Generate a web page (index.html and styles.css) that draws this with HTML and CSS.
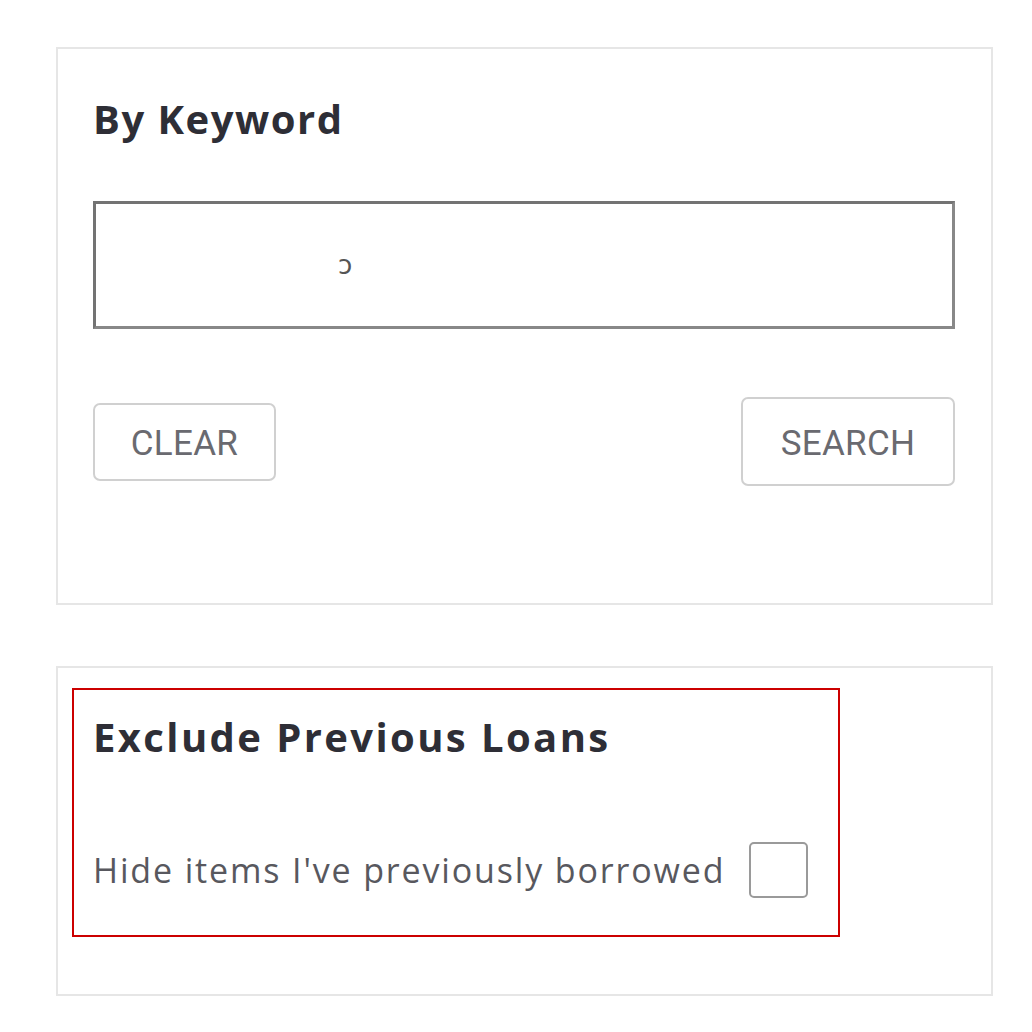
FILE: index.html
```html
<!DOCTYPE html>
<html>
<head>
<meta charset="utf-8">
<link rel="stylesheet" href="styles.css">
</head>
<body>
<div class="page">
  <section class="card card-keyword">
    <h2 class="card-title">By Keyword</h2>
    <div class="keyword-input"><span class="caret">ↄ</span></div>
    <div class="actions">
      <button class="btn btn-clear">CLEAR</button>
      <button class="btn btn-search">SEARCH</button>
    </div>
  </section>
  <section class="card card-loans">
    <div class="annot">
      <h2 class="card-title loans-title">Exclude Previous Loans</h2>
      <label class="check-row">
        <span class="check-label">Hide items I've previously borrowed</span>
        <span class="checkbox"></span>
      </label>
    </div>
  </section>
</div>
</body>
</html>
```
FILE: styles.css
```css
html, body {
  margin: 0;
  padding: 0;
  background: #ffffff;
}
.page {
  padding: 47px 39px 0 56px;
  display: flex;
  flex-direction: column;
  gap: 61px;
  font-family: "Open Sans", Lato, sans-serif;
}
.card {
  border: 2px solid #e6e6e6;
  box-sizing: border-box;
  width: 937px;
}
.card-keyword {
  height: 558px;
  padding: 43px 36px 0 35px;
}
.card-title {
  margin: 0;
  font-size: 40px;
  line-height: 53px;
  font-weight: 700;
  letter-spacing: 1.5px;
  color: #2e2e36;
}
.keyword-input {
  margin-top: 56px;
  height: 128px;
  box-sizing: border-box;
  border: 3px solid #737373;
  border-bottom-color: #888888;
  border-right-color: #888888;
  position: relative;
}
.caret {
  position: absolute;
  left: 242px;
  top: 47px;
  font-family: "DejaVu Sans", sans-serif;
  font-size: 26px;
  line-height: 28px;
  color: #555;
}
.actions {
  margin-top: 68px;
  display: flex;
  justify-content: space-between;
  align-items: center;
}
.btn {
  background: #fff;
  border: 2px solid #d0d0d0;
  border-radius: 7px;
  font-family: Roboto, sans-serif;
  font-size: 35px;
  color: #6a6a70;
  letter-spacing: 0.3px;
  box-sizing: border-box;
  padding: 4px 0 0 0;
}
.btn-clear {
  width: 183px;
  height: 78px;
}
.btn-search {
  width: 214px;
  height: 89px;
}
.card-loans {
  height: 330px;
  padding: 20px 0 0 14px;
}
.annot {
  border: 2px solid #cc0000;
  width: 768px;
  height: 249px;
  box-sizing: border-box;
  padding: 20px 0 0 19px;
}
.loans-title {
  font-size: 40px;
  letter-spacing: 2.4px;
}
.check-row {
  margin-top: 79px;
  display: flex;
  align-items: center;
  gap: 24px;
}
.check-label {
  font-size: 34px;
  line-height: 44px;
  letter-spacing: 1.85px;
  color: #58585e;
}
.checkbox {
  width: 59px;
  height: 56px;
  box-sizing: border-box;
  border: 2px solid #9a9a9a;
  border-radius: 5px;
  background: #fff;
}
```
